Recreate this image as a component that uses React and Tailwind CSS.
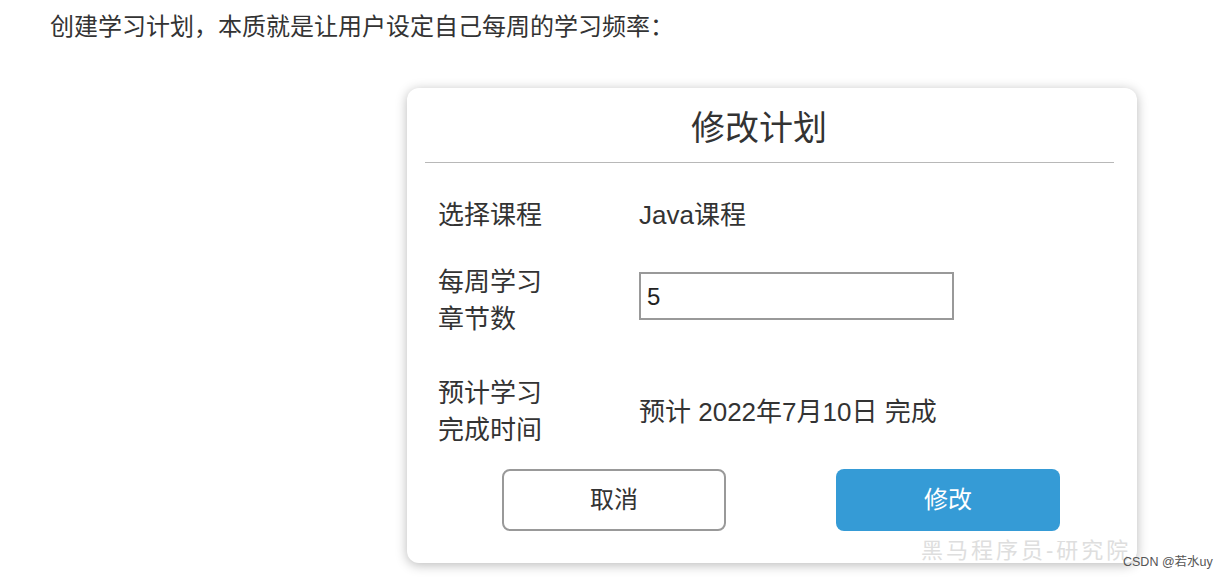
import React from 'react';

function App() {
    return (
        <div className="relative w-[1231px] h-[580px] overflow-hidden bg-white text-[#333] font-['Liberation_Sans','Noto_Sans_CJK_SC',sans-serif]">
            <p className="pl-[50px] pt-[12px] text-[24px] leading-[30px] text-[#333]">
                创建学习计划，本质就是让用户设定自己每周的学习频率：
            </p>

            <div className="ml-[407px] mt-[46px] w-[730px] h-[475px] rounded-[12px] bg-white shadow-[0_2px_12px_rgba(0,0,0,0.28)]">
                <h2 className="pt-[20px] pr-[26px] text-center text-[34px] leading-[40px] text-[#333]">修改计划</h2>
                <div className="ml-[18px] mr-[23px] mt-[14px] h-px bg-[#b8b8b8]" />

                <div className="pl-[31px] text-[26px] leading-[37px] text-[#333]">
                    <div className="mt-[34px] flex">
                        <div className="w-[201px]">选择课程</div>
                        <div>Java课程</div>
                    </div>

                    <div className="mt-[30px] flex items-start">
                        <div className="w-[201px]">每周学习<br />章节数</div>
                        <div className="mt-[8px] w-[315px] h-[48px] border-2 border-[#999] pl-[6px] flex items-center text-[24px] text-[#222]">
                            5
                        </div>
                    </div>

                    <div className="mt-[37px] flex items-center">
                        <div className="w-[201px]">预计学习<br />完成时间</div>
                        <div>预计 2022年7月10日 完成</div>
                    </div>
                </div>

                <div className="mt-[20px] flex pl-[95px] gap-[110px]">
                    <button className="w-[224px] h-[62px] rounded-[8px] border-2 border-[#999] bg-white text-[24px] text-[#333]">
                        取消
                    </button>
                    <button className="w-[224px] h-[62px] rounded-[8px] bg-[#359bd6] text-[24px] text-white">
                        修改
                    </button>
                </div>
            </div>

            <div className="absolute left-[921px] top-[536px] text-[22px] leading-[30px] tracking-[3px] text-[#dedede]">
                黑马程序员-研究院
            </div>
            <div className="absolute left-[1123px] top-[554px] text-[12.5px] leading-[16px] text-[#555]">
                CSDN @若水uy
            </div>
        </div>
    );
}

export default App;
